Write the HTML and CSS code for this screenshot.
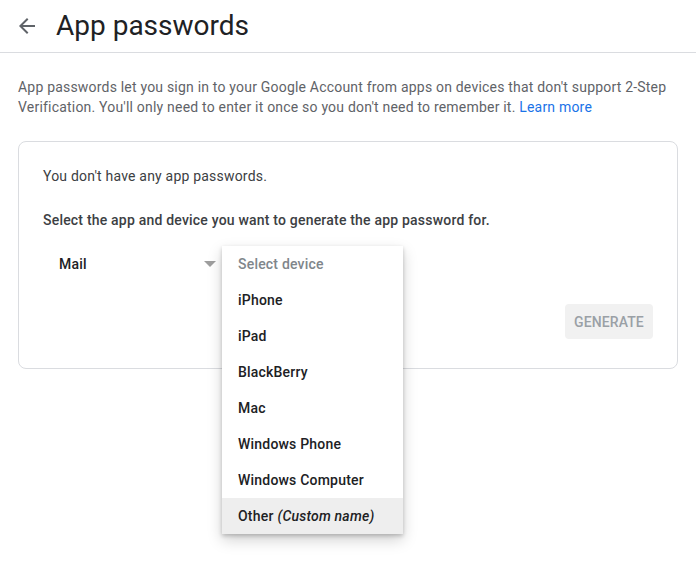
FILE: index.html
```html
<!DOCTYPE html>
<html>
<head>
<meta charset="utf-8">
<link rel="stylesheet" href="styles.css">
</head>
<body>
<header class="header">
  <svg class="back" viewBox="0 0 24 24" width="24" height="24"><path d="M20 11H7.83l5.59-5.59L12 4l-8 8 8 8 1.41-1.41L7.83 13H20v-2z"/></svg>
  <h1 class="title">App passwords</h1>
</header>
<main class="main">
  <p class="intro">App passwords let you sign in to your Google Account from apps on devices that don't support 2-Step Verification. You'll only need to enter it once so you don't need to remember it. <a class="link" href="#">Learn more</a></p>
  <section class="card">
    <p class="none">You don't have any app passwords.</p>
    <p class="select-label">Select the app and device you want to generate the app password for.</p>
    <div class="selects">
      <div class="select">
        <span class="select-value">Mail</span>
        <span class="caret"></span>
      </div>
      <ul class="menu">
        <li class="menu-item placeholder">Select device</li>
        <li class="menu-item">iPhone</li>
        <li class="menu-item">iPad</li>
        <li class="menu-item">BlackBerry</li>
        <li class="menu-item">Mac</li>
        <li class="menu-item">Windows Phone</li>
        <li class="menu-item">Windows Computer</li>
        <li class="menu-item active">Other <em class="custom">(Custom name)</em></li>
      </ul>
    </div>
    <div class="actions">
      <button class="generate">GENERATE</button>
    </div>
  </section>
</main>
</body>
</html>
```
FILE: styles.css
```css
* { box-sizing: border-box; }
html, body { height: 100%; }
body {
  margin: 0;
  min-height: 100vh;
  font-family: Roboto, "Liberation Sans", Arial, sans-serif;
  background: #fff;
  color: #3c4043;
  letter-spacing: 0.2px;
}
.header {
  height: 53px;
  border-bottom: 1px solid #dadce0;
  display: flex;
  align-items: center;
  padding-left: 15px;
  gap: 17px;
}
.back { fill: #5f6368; display: block; }
.title {
  margin: 0;
  font-size: 28px;
  font-weight: 400;
  color: #202124;
  line-height: 36px;
  letter-spacing: 0;
}
.main { padding: 24px 18px; }
.intro {
  margin: 0 0 24px;
  font-size: 14px;
  line-height: 20px;
  color: #5f6368;
}
.link { color: #1a73e8; text-decoration: none; }
.card {
  border: 1px solid #dadce0;
  border-radius: 8px;
  padding: 24px 24px 29px;
}
.none {
  margin: 0 0 24px;
  font-size: 14px;
  line-height: 20px;
  color: #3c4043;
}
.select-label {
  margin: 0 0 16px;
  font-size: 14px;
  line-height: 20px;
  font-weight: 500;
  color: #3c4043;
}
.selects {
  position: relative;
  display: flex;
  height: 36px;
}
.select {
  width: 179px;
  height: 36px;
  display: flex;
  align-items: center;
  justify-content: space-between;
  padding: 0 6px 0 16px;
}
.select-value {
  font-size: 14px;
  font-weight: 500;
  color: #202124;
}
.caret {
  width: 0;
  height: 0;
  border-left: 6px solid transparent;
  border-right: 6px solid transparent;
  border-top: 6px solid #9e9e9e;
}
.menu {
  position: absolute;
  left: 179px;
  top: 0;
  width: 181px;
  margin: 0;
  padding: 0;
  list-style: none;
  background: #fff;
  box-shadow: 0 2px 4px rgba(0,0,0,0.2), 0 6px 14px rgba(0,0,0,0.18);
  z-index: 2;
}
.menu-item {
  height: 36px;
  display: flex;
  align-items: center;
  padding-left: 16px;
  font-size: 14px;
  font-weight: 500;
  color: #202124;
  white-space: nowrap;
}
.placeholder { color: #80868b; }
.active { background: #eeeeee; }
.custom { font-style: italic; margin-left: 4px; font-weight: 500; }
.actions {
  display: flex;
  justify-content: flex-end;
  margin-top: 22px;
}
.generate {
  width: 88px;
  height: 35px;
  border: none;
  border-radius: 4px;
  background: #f1f1f1;
  color: #9aa0a6;
  font-family: Roboto, "Liberation Sans", Arial, sans-serif;
  font-size: 14px;
  font-weight: 500;
  letter-spacing: 0.1px;
  padding: 0;
}
```
